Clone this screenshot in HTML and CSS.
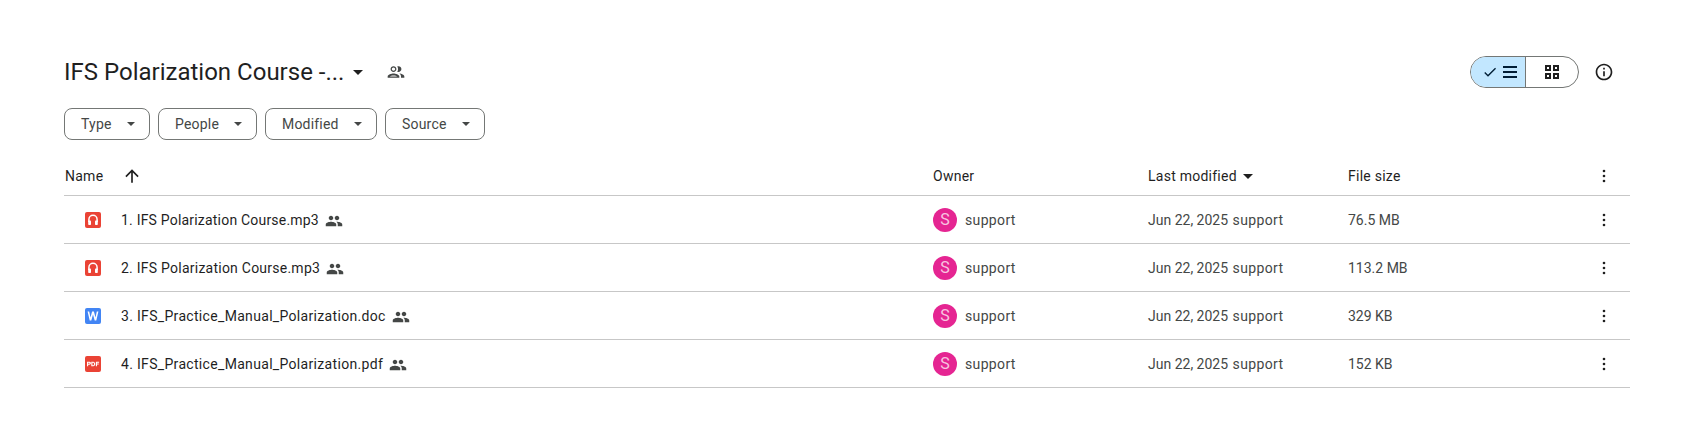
FILE: index.html
```html
<!DOCTYPE html>
<html lang="en">
<head>
  <meta charset="UTF-8">
  <title>IFS Polarization Course - Google Drive</title>
  <link rel="stylesheet" href="styles.css">
</head>
<body>

<svg class="defs" width="0" height="0">
  <symbol id="i-group" viewBox="0 0 24 24"><path d="M16 11c1.66 0 2.99-1.34 2.99-3S17.66 5 16 5c-1.66 0-3 1.34-3 3s1.34 3 3 3zm-8 0c1.66 0 2.99-1.34 2.99-3S9.66 5 8 5C6.34 5 5 6.34 5 8s1.34 3 3 3zm0 2c-2.33 0-7 1.17-7 3.5V19h14v-2.5c0-2.33-4.67-3.5-7-3.5zm8 0c-.29 0-.62.02-.97.05 1.16.84 1.97 1.97 1.97 3.45V19h6v-2.5c0-2.33-4.67-3.5-7-3.5z"/></symbol>
  <symbol id="i-more" viewBox="0 0 20 20"><circle cx="10" cy="5" r="1.300"/><circle cx="10" cy="10" r="1.300"/><circle cx="10" cy="15" r="1.300"/></symbol>
  <symbol id="i-audio" viewBox="0 0 16 16"><rect width="16" height="16" rx="2" fill="#ea4335"/><path d="M3.900 10V7.400a4.100 4.100 0 0 1 8.200 0V10" fill="none" stroke="#fff" stroke-width="1.500"/><rect x="3.200" y="8.600" width="2.800" height="4.400" rx=".8" fill="#fff"/><rect x="10" y="8.600" width="2.800" height="4.400" rx=".8" fill="#fff"/></symbol>
</svg>

<main class="page">
  <header class="top">
    <div class="crumb">
      <h1 class="title">IFS Polarization Course -...</h1>
      <span class="caret caret-title"></span>
      <svg class="shared-outline" viewBox="0 0 24 24"><path d="M9 12c1.930 0 3.500-1.570 3.500-3.500S10.930 5 9 5 5.500 6.570 5.500 8.500 7.070 12 9 12zm0-5.500c1.100 0 2 .9 2 2s-.9 2-2 2-2-.9-2-2 .9-2 2-2zM9 13.750c-2.340 0-7 1.170-7 3.500V19h14v-1.750c0-2.330-4.660-3.500-7-3.500zM4.340 17.500c.84-.58 2.870-1.250 4.660-1.250s3.820.67 4.660 1.250H4.340zM16.040 13.810c1.160.84 1.960 1.960 1.960 3.440V19h4v-1.750c0-2.020-3.500-3.170-5.960-3.440zM15 12c1.930 0 3.500-1.570 3.500-3.500S16.930 5 15 5c-.54 0-1.040.13-1.500.35.630.89 1 1.980 1 3.150s-.37 2.260-1 3.150c.46.220.96.350 1.500.350z"/></svg>
    </div>
    <div class="top-actions">
      <div class="view-toggle">
        <div class="view-btn view-list">
          <svg class="ico-check" viewBox="0 0 24 24"><path d="M9 16.200 4.800 12l-1.400 1.400L9 19 21 7l-1.400-1.400z"/></svg>
          <svg class="ico-bars" viewBox="0 0 16 16"><path d="M1 2h14v2H1zM1 7h14v2H1zM1 12h14v2H1z"/></svg>
        </div>
        <div class="view-btn view-grid">
          <svg class="ico18" viewBox="0 0 18 18"><path fill-rule="evenodd" d="M2 2h6v6H2zM4 4v2h2V4zM10 2h6v6h-6zM12 4v2h2V4zM2 10h6v6H2zM4 12v2h2v-2zM10 10h6v6h-6zM12 12v2h2v-2z"/></svg>
        </div>
      </div>
      <svg class="info" viewBox="0 0 24 24"><path d="M11 7h2v2h-2zm0 4h2v6h-2zm1-9C6.480 2 2 6.480 2 12s4.480 10 10 10 10-4.480 10-10S17.520 2 12 2zm0 18c-4.410 0-8-3.590-8-8s3.590-8 8-8 8 3.590 8 8-3.590 8-8 8z"/></svg>
    </div>
  </header>

  <div class="filters">
    <button class="chip">Type<span class="caret"></span></button>
    <button class="chip">People<span class="caret"></span></button>
    <button class="chip">Modified<span class="caret"></span></button>
    <button class="chip">Source<span class="caret"></span></button>
  </div>

  <section class="list">
    <div class="row head">
      <div class="col-name">Name
        <svg class="sort-up" viewBox="0 0 24 24"><path d="M4 12l1.410 1.410L11 7.830V20h2V7.830l5.580 5.590L20 12l-8-8z"/></svg>
      </div>
      <div>Owner</div>
      <div class="col-mod">Last modified<span class="caret caret-dark"></span></div>
      <div>File size</div>
      <svg class="more"><use href="#i-more"/></svg>
    </div>

    <div class="row">
      <div class="col-name">
        <svg class="file-ico"><use href="#i-audio"/></svg>
        <span class="fname">1. IFS Polarization Course.mp3</span>
        <svg class="shared"><use href="#i-group"/></svg>
      </div>
      <div class="owner"><span class="avatar">S</span><span class="who">support</span></div>
      <div class="date">Jun 22, 2025 <span class="who by">support</span></div>
      <div>76.5 MB</div>
      <svg class="more"><use href="#i-more"/></svg>
    </div>

    <div class="row">
      <div class="col-name">
        <svg class="file-ico"><use href="#i-audio"/></svg>
        <span class="fname fname-two">2. IFS Polarization Course.mp3</span>
        <svg class="shared"><use href="#i-group"/></svg>
      </div>
      <div class="owner"><span class="avatar">S</span><span class="who">support</span></div>
      <div class="date">Jun 22, 2025 <span class="who by">support</span></div>
      <div>113.2 MB</div>
      <svg class="more"><use href="#i-more"/></svg>
    </div>

    <div class="row">
      <div class="col-name">
        <svg class="file-ico" viewBox="0 0 16 16"><rect width="16" height="16" rx="2" fill="#4285f4"/><path d="M2.600 3.500h1.600l1.300 6L7.100 3.500h1.800l1.600 6 1.300-6h1.600l-2.100 9h-1.600L8 6.500l-1.700 6H4.700z" fill="#fff"/></svg>
        <span class="fname fname-wide">3. IFS_Practice_Manual_Polarization.doc</span>
        <svg class="shared"><use href="#i-group"/></svg>
      </div>
      <div class="owner"><span class="avatar">S</span><span class="who">support</span></div>
      <div class="date">Jun 22, 2025 <span class="who by">support</span></div>
      <div>329 KB</div>
      <svg class="more"><use href="#i-more"/></svg>
    </div>

    <div class="row">
      <div class="col-name">
        <svg class="file-ico" viewBox="0 0 16 16"><rect width="16" height="16" rx="2" fill="#ea4335"/><path fill="#fff" fill-rule="evenodd" transform="translate(8 8) scale(1.150) translate(-8 -8)" d="M2.800 6h2.100a1.300 1.300 0 0 1 0 2.600H3.800V10h-1zM3.800 6.900v.8h.9a.4.4 0 0 0 0-.8zM6.500 6h1.700c1.100 0 1.700.9 1.700 2s-.6 2-1.700 2H6.500zM7.500 6.900v2.200h.6c.5 0 .8-.4.8-1.100s-.3-1.100-.8-1.100zM10.500 6h2.800v.9h-1.800v.7h1.500v.9h-1.500V10h-1z"/></svg>
        <span class="fname fname-wide">4. IFS_Practice_Manual_Polarization.pdf</span>
        <svg class="shared"><use href="#i-group"/></svg>
      </div>
      <div class="owner"><span class="avatar">S</span><span class="who">support</span></div>
      <div class="date">Jun 22, 2025 <span class="who by">support</span></div>
      <div>152 KB</div>
      <svg class="more"><use href="#i-more"/></svg>
    </div>
  </section>
</main>

</body>
</html>
```

FILE: styles.css
```css
* { box-sizing: border-box; }
body { margin: 0; background: #fff; color: #444746; font-family: Roboto, "Liberation Sans", sans-serif; font-size: 14px; }
.defs { display: block; height: 0; }
svg { fill: currentColor; flex: none; }

.page { padding: 52px 74px 0 64px; }

/* Title bar */
.top { display: flex; align-items: center; justify-content: space-between; height: 40px; }
.crumb { display: flex; align-items: center; color: #1f1f1f; }
.title { margin: 0; font-size: 24px; font-weight: 400; line-height: 32px; }
.caret { display: inline-block; width: 0; height: 0; border-left: 5px solid transparent; border-right: 5px solid transparent; border-top: 5px solid #444746; }
.caret-title { margin-left: 9px; border-top-color: #1f1f1f; }
.shared-outline { width: 20px; height: 20px; margin-left: 23px; color: #444746; }
.top-actions { display: flex; align-items: center; margin-right: 16px; }
.view-toggle { display: flex; width: 109px; height: 32px; border: 1px solid #747775; border-radius: 16px; overflow: hidden; }
.view-btn { display: flex; align-items: center; justify-content: center; }
.view-list { width: 55px; gap: 4px; background: #c2e7ff; border-right: 1px solid #747775; color: #001d35; padding-left: 3px; }
.view-grid { flex: 1; color: #1f1f1f; }
.ico18 { width: 18px; height: 18px; }
.ico-check { width: 16px; height: 16px; }
.ico-bars { width: 16px; height: 16px; }
.info { width: 20px; height: 20px; margin-left: 15px; color: #1f1f1f; }

/* Filter chips */
.filters { display: flex; gap: 8px; margin-top: 16px; }
.chip { display: flex; align-items: center; justify-content: space-between; height: 32px; padding: 0 14px 0 16px; border: 1px solid #747775; border-radius: 8px; background: #fff; color: #444746; font: inherit; letter-spacing: .2px; }
.chip:nth-child(1) { width: 86px; }
.chip:nth-child(2) { width: 99px; }
.chip:nth-child(3) { width: 112px; }
.chip:nth-child(4) { width: 100px; }
.chip .caret { border-left-width: 4px; border-right-width: 4px; border-top-width: 4px; }

/* File table */
.list { margin-top: 20px; }
.row { display: grid; grid-template-columns: 869px 215px 200px 1fr 20px; align-items: center; height: 48px; border-bottom: 1px solid #c7c7c7; padding-right: 16px; }
.row.head { height: 36px; padding-bottom: 3px; color: #1f1f1f; letter-spacing: .25px; }
.col-name { display: flex; align-items: center; padding-left: 21px; color: #1f1f1f; }
.head .col-name { padding-left: 1px; }
.sort-up { width: 20px; height: 20px; margin-left: 19px; }
.col-mod { display: flex; align-items: center; }
.caret-dark { margin-left: 6px; border-top-color: #1f1f1f; }
.more { width: 20px; height: 20px; color: #1f1f1f; }
.file-ico { width: 16px; height: 16px; }
.fname { margin-left: 20px; letter-spacing: .2px; }
.fname-two { letter-spacing: .24px; }
.fname-wide { letter-spacing: .32px; }
.shared { width: 18px; height: 18px; margin: 2px 0 0 6px; color: #444746; }
.owner { display: flex; align-items: center; gap: 8px; }
.avatar { display: flex; align-items: center; justify-content: center; width: 24px; height: 24px; border-radius: 50%; background: #e52592; color: #f8c4e0; font-size: 16px; }
.who { letter-spacing: .35px; }
.by { margin-left: 1px; }
```
